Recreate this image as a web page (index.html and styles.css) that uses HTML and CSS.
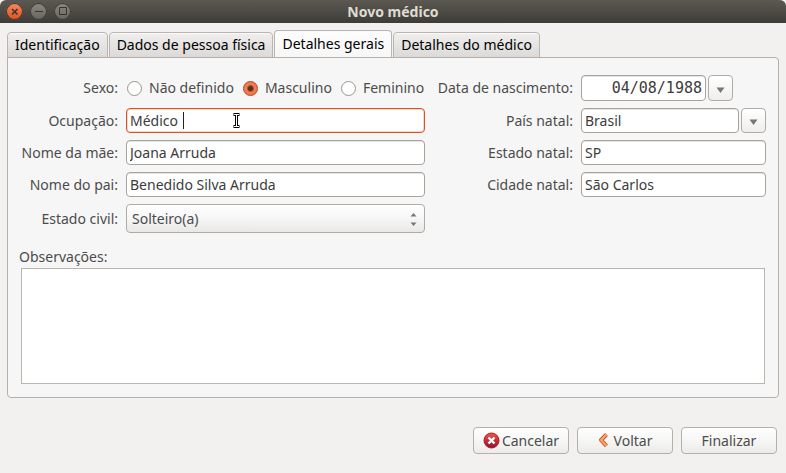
FILE: index.html
```html
<!doctype html>
<html lang="pt-BR">

<head>
    <meta charset="utf-8">
    <title>Novo médico</title>
    <link rel="stylesheet" href="styles.css">
</head>

<body>
    <header class="titlebar">
        <div class="window-buttons">
            <button type="button" class="win close" aria-label="Fechar">
                <svg width="17" height="17" viewBox="0 0 17 17"><path d="M6 6l5.500 5.500M11.500 6L6 11.500"/></svg>
            </button>
            <button type="button" class="win" aria-label="Minimizar">
                <svg width="17" height="17" viewBox="0 0 17 17"><path d="M5 8.500h8"/></svg>
            </button>
            <button type="button" class="win" aria-label="Maximizar">
                <svg width="17" height="17" viewBox="0 0 17 17"><path d="M5.500 4.500h7v7h-7z"/></svg>
            </button>
        </div>
        <h1 class="title">Novo médico</h1>
    </header>

    <form class="dialog" autocomplete="off" onsubmit="return false;">
        <div class="tabs" role="tablist">
            <button type="button" class="tab" role="tab">Identificação</button>
            <button type="button" class="tab" role="tab">Dados de pessoa física</button>
            <button type="button" class="tab active" role="tab" aria-selected="true">Detalhes gerais</button>
            <button type="button" class="tab" role="tab">Detalhes do médico</button>
        </div>

        <div class="panel" role="tabpanel">
            <div class="fields">
                <span class="label" id="sexo">Sexo:</span>
                <div class="radios" role="radiogroup" aria-labelledby="sexo">
                    <label class="radio"><input type="radio" name="sexo"> Não definido</label>
                    <label class="radio"><input type="radio" name="sexo" checked> Masculino</label>
                    <label class="radio"><input type="radio" name="sexo"> Feminino</label>
                </div>
                <label class="label" for="nascimento">Data de nascimento:</label>
                <div class="combo">
                    <input class="input date" id="nascimento" value="04/08/1988">
                    <button type="button" class="drop" aria-label="Abrir calendário">
                        <svg width="9" height="6" viewBox="0 0 9 6"><path d="M0.500 0.500h8L4.500 6z"/></svg>
                    </button>
                </div>

                <label class="label" for="ocupacao">Ocupação:</label>
                <div class="field">
                    <input class="input focused" id="ocupacao" value="Médico ">
                    <span class="caret"></span>
                    <svg class="pointer" width="9" height="17" viewBox="0 0 9 17">
                        <path class="halo" d="M1.500 2.500h6M4.500 2.500v12M1.500 14.500h6"/>
                        <path class="core" d="M2 2.500h5M4.500 2.500v12M2 14.500h5"/>
                    </svg>
                </div>
                <label class="label" for="pais">País natal:</label>
                <div class="combo">
                    <input class="input" id="pais" value="Brasil">
                    <button type="button" class="drop" aria-label="Escolher país">
                        <svg width="9" height="6" viewBox="0 0 9 6"><path d="M0.500 0.500h8L4.500 6z"/></svg>
                    </button>
                </div>

                <label class="label" for="mae">Nome da mãe:</label>
                <input class="input" id="mae" value="Joana Arruda">
                <label class="label" for="estado">Estado natal:</label>
                <input class="input" id="estado" value="SP">

                <label class="label" for="pai">Nome do pai:</label>
                <input class="input" id="pai" value="Benedido Silva Arruda">
                <label class="label" for="cidade">Cidade natal:</label>
                <input class="input" id="cidade" value="São Carlos">

                <label class="label" for="civil">Estado civil:</label>
                <div class="field">
                    <select class="select" id="civil">
                        <option>Solteiro(a)</option>
                    </select>
                    <svg class="arrows" width="7" height="13" viewBox="0 0 7 13"><path d="M0.500 3.500h6L3.500 0zM0.500 9.500h6L3.500 13z"/></svg>
                </div>
            </div>

            <label class="notes-label" for="observacoes">Observações:</label>
            <textarea class="notes" id="observacoes"></textarea>
        </div>

        <div class="actions">
            <button type="button" class="button">
                <svg width="17" height="17" viewBox="0 0 17 17">
                    <defs>
                        <linearGradient id="red" x1="0" y1="0" x2="0" y2="1">
                            <stop offset="0" stop-color="#ee5a4a"/>
                            <stop offset="0.500" stop-color="#cc2b35"/>
                            <stop offset="1" stop-color="#8c1238"/>
                        </linearGradient>
                    </defs>
                    <circle cx="8.500" cy="8.500" r="7.500" fill="url(#red)" stroke="#a51d2d"/>
                    <path d="M5.500 5.500l6 6M11.500 5.500l-6 6" stroke="#fff" stroke-width="2.400"/>
                </svg>
                Cancelar
            </button>
            <button type="button" class="button back">
                <svg width="11" height="17" viewBox="0 0 11 17">
                    <path d="M8.500 2.500L3 8l5.500 6" fill="none" stroke="#d9502a" stroke-width="4" stroke-linejoin="round"/>
                    <path d="M8.500 2.500L3 8l5.500 6" fill="none" stroke="#f9a870" stroke-width="2" stroke-linejoin="round"/>
                </svg>
                Voltar
            </button>
            <button type="submit" class="button">Finalizar</button>
        </div>
    </form>
</body>

</html>
```

FILE: styles.css
```css
* {
    box-sizing: border-box;
}

body {
    display: flex;
    flex-direction: column;
    min-height: 100vh;
    margin: 0;
    font-family: "Noto Sans", "Open Sans", sans-serif;
    font-size: 14px;
    line-height: 20px;
    color: #4c4c4c;
    background: #f2f1f0;
}

button, input, select, textarea {
    font: inherit;
    color: inherit;
    margin: 0;
}

.titlebar {
    display: grid;
    grid-template-columns: 1fr auto 1fr;
    align-items: center;
    height: 23px;
    padding: 0 6px;
    border-radius: 6px 6px 0 0;
    background: linear-gradient(#5b5951, #3d3c38);
}

.window-buttons {
    display: flex;
    gap: 7px;
}

.win {
    display: flex;
    width: 17px;
    height: 17px;
    padding: 0;
    border: none;
    border-radius: 50%;
    background: linear-gradient(#8b897f, #66645c);
    box-shadow: inset 0 0 0 1px #3a3935;
}

.win path {
    fill: none;
    stroke: #37352f;
}

.close {
    background: linear-gradient(#f58a63, #e2501c);
}

.close path {
    stroke-width: 1.5;
}

.title {
    margin: 0;
    font-size: 14px;
    color: #dfdbd2;
}

.dialog {
    display: flex;
    flex: 1;
    flex-direction: column;
    padding: 7px 7px 19px;
}

.tabs {
    display: flex;
    align-items: flex-end;
    gap: 1px;
    margin-bottom: -1px;
}

.tab {
    height: 26px;
    padding: 0 7px;
    border: 1px solid #bab5b0;
    border-radius: 4px 4px 0 0;
    color: #000;
    background: linear-gradient(#f0efee, #dcdad8);
    box-shadow: inset 0 1px #fafafa;
}

.active {
    height: 28px;
    padding-bottom: 2px;
    border-bottom: none;
    background: linear-gradient(#fdfdfd, #f6f6f6);
}

.panel {
    display: flex;
    flex: 1;
    flex-direction: column;
    padding: 17px 12px 13px;
    border: 1px solid #b5b0ab;
    border-radius: 0 4px 4px 4px;
    background: #f6f6f6;
}

.fields {
    display: grid;
    grid-template-columns: 98px 1fr 140px 185px;
    gap: 7px 8px;
    align-items: center;
}

.label {
    text-align: right;
    white-space: nowrap;
}

.radios {
    display: flex;
    gap: 9px;
    padding-left: 1px;
}

.radio {
    display: flex;
    align-items: center;
    gap: 7px;
    white-space: nowrap;
}

.radio input {
    appearance: none;
    width: 15px;
    height: 15px;
    border: 1px solid #9a9590;
    border-radius: 50%;
    background: #fff;
}

.radio input:checked {
    border-color: #b2431d;
    background: radial-gradient(circle, #5c3020 2px, #f07c51 4px);
}

.field {
    position: relative;
    display: flex;
}

.input {
    flex: 1;
    width: 100%;
    min-width: 0;
    height: 25px;
    padding: 0 3px;
    border: 1px solid #a8a29c;
    border-radius: 4px;
    color: #3c3c3c;
    background: #fff;
    box-shadow: inset 0 1px #e6e4e2;
}

.focused {
    border-color: #d4542a;
    box-shadow: inset 0 0 0 1px #f9d6c8;
}

.date {
    flex: none;
    width: 125px;
    height: 26px;
    font-family: "DejaVu Sans Mono", monospace;
    font-size: 15px;
    text-align: right;
}

.combo {
    display: flex;
    gap: 2px;
}

.drop {
    display: flex;
    align-items: center;
    justify-content: center;
    width: 25px;
    padding: 3px 0 0;
    border: 1px solid #b0aba6;
    border-radius: 4px;
    background: linear-gradient(#fff, #efeeed);
}

.drop path, .arrows path {
    fill: #777;
}

.caret {
    position: absolute;
    top: 4px;
    left: 57px;
    width: 1px;
    height: 17px;
    background: #222;
}

.pointer {
    position: absolute;
    top: 4px;
    left: 106px;
    fill: none;
}

.halo {
    stroke: #000;
    stroke-width: 3;
}

.core {
    stroke: #fff;
}

.select {
    appearance: none;
    width: 100%;
    height: 29px;
    padding: 0 5px;
    border: 1px solid #b0aba6;
    border-radius: 4px;
    background: linear-gradient(#fff, #f6f6f6 50%, #e9e8e7);
}

.arrows {
    position: absolute;
    top: 9px;
    right: 8px;
}

.notes-label {
    margin: 14px 0 1px -1px;
}

.notes {
    flex: 1;
    min-height: 60px;
    margin: 0 1px;
    border: 1px solid #bab5b0;
    background: #fff;
    resize: none;
}

.actions {
    display: flex;
    justify-content: flex-end;
    gap: 8px;
    margin-top: 29px;
    padding-right: 2px;
}

.button {
    display: flex;
    align-items: center;
    justify-content: center;
    gap: 2px;
    width: 96px;
    height: 27px;
    padding: 0;
    border: 1px solid #b5b0ab;
    border-radius: 4px;
    background: linear-gradient(#fff, #f4f4f3 60%, #ebebea);
}

.back {
    gap: 5px;
}
```
